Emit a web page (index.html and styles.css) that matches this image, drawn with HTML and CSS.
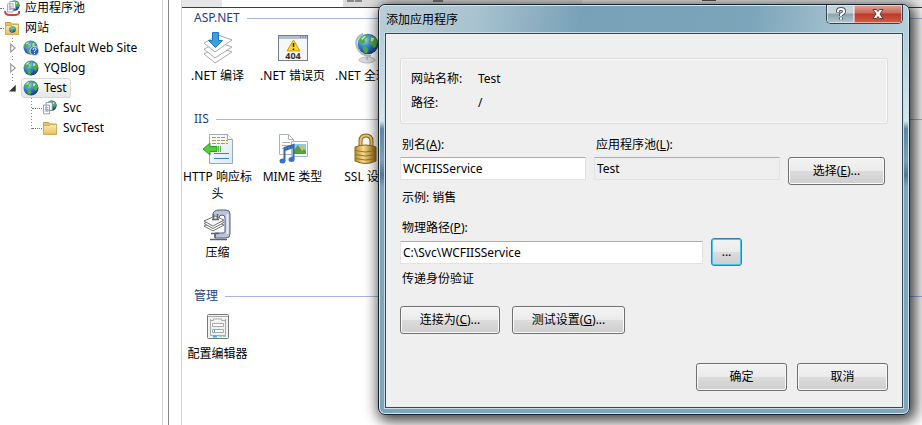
FILE: index.html
```
<!DOCTYPE html>
<html lang="zh-CN">
    <head>
        <meta charset="utf-8">
        <title>添加应用程序</title>
        <link rel="stylesheet" href="styles.css">
    </head>
    <body>
        <svg class="defs" aria-hidden="true">
            <defs>
                <radialGradient id="sea" cx="35%" cy="30%" r="75%">
                    <stop offset="0" stop-color="#a8d8f4"/>
                    <stop offset="0.45" stop-color="#3b86c8"/>
                    <stop offset="1" stop-color="#123a7c"/>
                </radialGradient>
                <linearGradient id="folder" x2="0" y2="1">
                    <stop offset="0" stop-color="#fdeeb0"/>
                    <stop offset="1" stop-color="#e5bd62"/>
                </linearGradient>
                <linearGradient id="gold" x2="1" y2="0">
                    <stop offset="0" stop-color="#b98a2c"/>
                    <stop offset="0.4" stop-color="#f6dc8c"/>
                    <stop offset="1" stop-color="#9a6a14"/>
                </linearGradient>
                <linearGradient id="paper" x2="1" y2="1">
                    <stop offset="0" stop-color="#fff"/>
                    <stop offset="1" stop-color="#d9e8f2"/>
                </linearGradient>
                <symbol id="globe" viewBox="0 0 16 16">
                    <circle cx="8" cy="8" r="7.500" fill="url(#sea)"/>
                    <path fill="#4fae43" d="M2 4.500L5 1.500 8 1.200 7.500 3 5.500 4.500 6 6.500 4 8 2 7.500 1 6zM9.500 2L13 3 15 6.500 14 9.500 12.500 11 11 9 9 8 8.500 5.500 10.500 4.500zM4 9.500L7 10 8.500 12 7 15 5 14z"/>
                    <path fill="#c9f0a6" d="M3 4L5.500 2 6.500 2.500 4 5zM10.500 3L12.500 4 11.500 6 10 6z"/>
                </symbol>
                <symbol id="pages" viewBox="0 0 16 16">
                    <path fill="#fff" stroke="#8295a5" d="M3.500.500h7v9h-7zM.500 3.500h7v10h-7z"/>
                    <path stroke="#8da0b0" d="M2 6.500h4M2 8.500h4M2 10.500h4"/>
                </symbol>
                <symbol id="dir" viewBox="0 0 16 16">
                    <path fill="#e8c26c" stroke="#c49a45" d="M1.500 13.500v-11h5l1 1.500h7v9.500z"/>
                    <path fill="url(#folder)" stroke="#d3ab55" d="M1.500 14.500v-9h6l1-1h6v10z"/>
                </symbol>
            </defs>
        </svg>

        <div class="manager">
            <nav class="tree">
                <ul>
                    <li>
                        <div class="node root">
                            <svg class="icon" viewBox="0 0 16 16">
                                <use href="#globe" x="5" y="0" width="11" height="11"/>
                                <path d="M1 11q0 4 5 4h6q4-1 3-4" fill="none" stroke="#c94444" stroke-width="2"/>
                                <use href="#pages" x="3" y="1" width="13" height="13"/>
                            </svg>
                            <span class="name">应用程序池</span>
                        </div>
                    </li>
                    <li>
                        <div class="node root">
                            <svg class="icon" viewBox="0 0 16 16">
                                <use href="#dir" width="16" height="16"/>
                                <use href="#globe" x="5" y="6" width="7" height="7"/>
                            </svg>
                            <span class="name">网站</span>
                        </div>
                        <ul class="sites">
                            <li>
                                <div class="node site">
                                    <button class="toggle" aria-label="展开"><svg viewBox="0 0 8 10"><path d="M1.500 1.500v7L5.500 5z" fill="#fff" stroke="#999"/></svg></button>
                                    <svg class="icon" viewBox="0 0 16 16">
                                        <use href="#globe" width="15" height="15"/>
                                        <circle cx="11.500" cy="11" r="4.500" fill="#2c62b4" stroke="#dce8f6"/>
                                        <path d="M10 10q0-2 1.500-2t1.500 1.300q0 .800-1.500 1.700v1M11.500 13v1" fill="none" stroke="#fff"/>
                                    </svg>
                                    <span class="name">Default Web Site</span>
                                </div>
                            </li>
                            <li>
                                <div class="node site">
                                    <button class="toggle" aria-label="展开"><svg viewBox="0 0 8 10"><path d="M1.500 1.500v7L5.500 5z" fill="#fff" stroke="#999"/></svg></button>
                                    <svg class="icon"><use href="#globe"/></svg>
                                    <span class="name">YQBlog</span>
                                </div>
                            </li>
                            <li>
                                <div class="node site">
                                    <button class="toggle" aria-label="折叠"><svg viewBox="0 0 8 10"><path d="M6 2v6H0z" fill="#333"/></svg></button>
                                    <span class="selected">
                                        <svg class="icon"><use href="#globe"/></svg>
                                        <span class="name">Test</span>
                                    </span>
                                </div>
                                <ul class="apps">
                                    <li class="node">
                                        <svg class="icon" viewBox="0 0 16 16">
                                            <use href="#globe" x="4" y="0" width="11" height="11"/>
                                            <use href="#pages" x="1" y="2" width="14" height="14"/>
                                        </svg>
                                        <span class="name">Svc</span>
                                    </li>
                                    <li class="node">
                                        <svg class="icon"><use href="#dir"/></svg>
                                        <span class="name">SvcTest</span>
                                    </li>
                                </ul>
                            </li>
                        </ul>
                    </li>
                </ul>
            </nav>

            <main class="features">
                <div class="filter-bar"></div>
                <section>
                    <h2>ASP.NET</h2>
                    <div class="items">
                        <a href="#">
                            <svg viewBox="0 0 32 32">
                                <g fill="#fff" stroke="#aaa">
                                    <path d="M2 22l14-7 14 5-17 11z"/>
                                    <path d="M2 17l14-7 14 5-17 11z"/>
                                    <path d="M2 11l14-8 14 5-17 12z"/>
                                </g>
                                <path d="M10.500.500h6v8h4L13.500 15.500 6.500 8.500h4z" fill="#3aa0e0" stroke="#1f78bb"/>
                            </svg>
                            .NET 编译
                        </a>
                        <a href="#">
                            <svg viewBox="0 0 32 32">
                                <rect x="1.500" y="3.500" width="29" height="25" fill="#f6f7f9" stroke="#777e88"/>
                                <path d="M2 5.500h28" stroke="#b3bfce" stroke-width="3"/>
                                <path d="M23 5h1M25.500 5h1M28 5h1" stroke="#555"/>
                                <path d="M16.500 8L23 19H10z" fill="#ffd633" stroke="#d19c0b"/>
                                <path d="M16.500 11v4M16.500 16.500v1.500" stroke="#222" stroke-width="1.500"/>
                                <text class="code" x="16" y="27">404</text>
                            </svg>
                            .NET 错误页
                        </a>
                        <a href="#">
                            <svg viewBox="0 0 32 32">
                                <ellipse cx="15" cy="28" rx="8" ry="3" fill="#d8dadc" stroke="#bbb"/>
                                <path d="M11 2Q2 6 5 15t14 9M15 24v4" fill="none" stroke="#b4b8bc" stroke-width="2"/>
                                <use href="#globe" x="5" y="1" width="22" height="22"/>
                            </svg>
                            .NET 全球化
                        </a>
                    </div>
                </section>
                <section>
                    <h2>IIS</h2>
                    <div class="items">
                        <a href="#">
                            <svg viewBox="0 0 32 32">
                                <path d="M7.500 1.500h18l5 5v24h-23z" fill="url(#paper)" stroke="#9ea9b2"/>
                                <path d="M25.500 1.500v5h5" fill="#fff" stroke="#9ea9b2"/>
                                <path d="M10 4.500h14M10 7.500h16M10 10.500h16" stroke="#ad9d3b" stroke-dasharray="4 1 3 1"/>
                                <path d="M12 20.500h15M12 25.500h15" stroke="#3d80c2"/>
                                <path d="M1 16l7-6v3.500h7v5H8V22z" fill="#56cb3b" stroke="#2d9c25"/>
                                <path d="M16.500 13v6M18.500 13v6" stroke="#4fbd3a"/>
                            </svg>
                            HTTP 响应标头
                        </a>
                        <a href="#">
                            <svg viewBox="0 0 32 32">
                                <path d="M2.500 1.500h9l5 5v15h-14z" fill="#fff" stroke="#aab2b8"/>
                                <path d="M11.500 1.500v5h5M5 9.500h8M5 12.500h8M5 15.500h8" fill="none" stroke="#aab2b8"/>
                                <path d="M14.500 8.500h16v15h-16z" fill="#fff" stroke="#9bb8d8"/>
                                <path d="M17 11h12v10H17z" fill="#8cc8f0"/>
                                <path d="M17 21v-4l4-5 4 6 2-2 2 2v3z" fill="#4fa52e"/>
                                <circle cx="25.500" cy="14.500" r="2" fill="#f4b731"/>
                                <path d="M7.500 28V15l9-3v14" fill="none" stroke="#3869b0" stroke-width="2"/>
                                <path d="M8 17l8-3" stroke="#3869b0" stroke-width="2"/>
                                <ellipse cx="5.500" cy="28" rx="3" ry="2.500" fill="#3974c4"/>
                                <ellipse cx="14.500" cy="26.500" rx="3" ry="2.500" fill="#3974c4"/>
                            </svg>
                            MIME 类型
                        </a>
                        <a href="#">
                            <svg viewBox="0 0 32 32">
                                <path d="M8.500 15V8q0-5.500 5.500-5.500T19.500 8v7" fill="none" stroke="#8b661a" stroke-width="4"/>
                                <path d="M8.500 15V8q0-5.500 5.500-5.500T19.500 8v7" fill="none" stroke="#e6c56c" stroke-width="2"/>
                                <path d="M3 14q10-4 21 0v14q-10 5-21 0z" fill="url(#gold)" stroke="#8b661a"/>
                                <path d="M3 17.500q10 3 21 0M3 21.500q10 3 21 0M3 25.500q10 3 21 0" fill="none" stroke="#9b7423"/>
                            </svg>
                            SSL 设置
                        </a>
                        <a href="#">
                            <svg viewBox="0 0 32 32">
                                <path d="M11 9V6q0-5 6-5h7q4 0 4 4v20q0 4-4 4H13v-5h8q2 0 2-2V9q0-3-3-3-3 0-3 3z" fill="#b9c4da" stroke="#56617a"/>
                                <path d="M25.500 5v20" stroke="#e9eef7" stroke-width="2"/>
                                <g fill="#f7f8f8" stroke="#777">
                                    <path d="M2 17l11-5 9 4-11 6z"/>
                                    <path d="M2 14.500l11-5 9 4-11 6z"/>
                                    <path d="M2 12l11-5 9 4-11 6z"/>
                                </g>
                                <path d="M10 10.500h7M11.500 5v5M15.500 5v5M13 24v5M9 24.500h8M8 30.500h17" stroke="#5b6475" stroke-width="1.500"/>
                            </svg>
                            压缩
                        </a>
                    </div>
                </section>
                <section>
                    <h2>管理</h2>
                    <div class="items">
                        <a href="#">
                            <svg viewBox="0 0 32 32">
                                <rect x="5.500" y="4.500" width="21" height="24" rx="1" fill="#f1f1f1" stroke="#777"/>
                                <path d="M6 6.500h20M8.500 9v16.500h15V9" fill="none" stroke="#aaa"/>
                                <path d="M8.500 10.500h3V9h8v1.500h4M10.500 13.500h11v3h-11zM10.500 19.500h11v3h-11z" fill="#fff" stroke="#a4a7ac"/>
                                <path d="M11 26.500h4M12 21h1" stroke="#31b9d1" stroke-width="2"/>
                                <path d="M17 26.500h3M21 26.500h3" stroke="#8acfdb"/>
                            </svg>
                            配置编辑器
                        </a>
                    </div>
                </section>
            </main>
        </div>

        <div class="dialog" role="dialog" aria-labelledby="dialog-title">
            <div class="titlebar">
                <h1 id="dialog-title">添加应用程序</h1>
                <div class="window-buttons">
                    <button class="help" aria-label="帮助">
                        <svg viewBox="0 0 12 14"><path d="M3 5.500V4q0-2 3-2t3 2.200Q9 6 6 7.500V9M6 10.500v2" fill="none" stroke="#4b5865" stroke-width="4"/><path d="M3 5V4q0-2 3-2t3 2.200Q9 6 6 7.500V9M6 10.500v2" fill="none" stroke="#fff" stroke-width="2"/></svg>
                    </button>
                    <button class="close" aria-label="关闭">
                        <svg viewBox="0 0 12 14"><path d="M1 2.500h3.500L6 4.500l1.500-2H11L8 7l3 4.500H7.500L6 9.500l-1.500 2H1L4 7z" fill="#fff" stroke="#5c3a3a"/></svg>
                    </button>
                </div>
            </div>
            <form class="client">
                <dl class="summary">
                    <dt>网站名称:</dt>
                    <dd>Test</dd>
                    <dt>路径:</dt>
                    <dd>/</dd>
                </dl>

                <div class="row top">
                    <div class="field">
                        <label for="alias">别名(<u>A</u>):</label>
                        <input id="alias" type="text" value="WCFIISService">
                    </div>
                    <div class="field">
                        <label for="pool">应用程序池(<u>L</u>):</label>
                        <input id="pool" type="text" value="Test" readonly>
                    </div>
                    <button type="button" class="select-pool">选择(<u>E</u>)...</button>
                </div>
                <p>示例: 销售</p>

                <label class="path-label" for="path">物理路径(<u>P</u>):</label>
                <div class="row">
                    <input id="path" class="path" type="text" value="C:\Svc\WCFIISService">
                    <button type="button" class="browse">...</button>
                </div>
                <p>传递身份验证</p>

                <div class="row actions">
                    <button type="button" class="connect">连接为(<u>C</u>)...</button>
                    <button type="button" class="test">测试设置(<u>G</u>)...</button>
                </div>

                <div class="row footer">
                    <button type="submit">确定</button>
                    <button type="button">取消</button>
                </div>
            </form>
        </div>
    </body>
</html>
```

FILE: styles.css
```
* {
    box-sizing: border-box;
}
html, body {
    height: 100%;
}
body {
    margin: 0;
    overflow: hidden;
    background: #fff;
    color: #000;
    font-family: "Noto Sans", "Noto Sans CJK SC", sans-serif;
    font-size: 12px;
    line-height: 20px;
}
ul, p, h1, h2, dl, dd {
    margin: 0;
    padding: 0;
    list-style: none;
    font-size: 12px;
    font-weight: normal;
}
button, input {
    font: inherit;
    color: inherit;
}
.defs {
    position: absolute;
    width: 0;
    height: 0;
}

.manager {
    display: flex;
    min-height: 100%;
}

/* connections tree */
.tree {
    flex: 0 0 169px;
    border-right: 1px solid #858585;
    background: linear-gradient(#d4d4d4, #d4d4d4) 162px 0 / 1px 100% no-repeat;
}
.tree > ul {
    margin-top: -2px;
}
.node {
    display: flex;
    align-items: center;
    height: 20px;
    gap: 5px;
    white-space: nowrap;
}
.node::before {
    content: "";
    width: 4px;
    margin-right: -5px;
    border-top: 1px dotted #777;
}
.icon {
    width: 16px;
    height: 16px;
    flex-shrink: 0;
}
.sites {
    background: repeating-linear-gradient(#888 0 1px, transparent 1px 3px) 12px 0 / 1px 50px no-repeat;
}
.site {
    padding-left: 9px;
}
.site::before {
    display: none;
}
.toggle {
    width: 9px;
    height: 12px;
    padding: 0;
    border: 0;
    background: #fff;
    display: flex;
}
.toggle svg {
    width: 9px;
    height: 12px;
}
.selected {
    display: flex;
    align-items: center;
    gap: 5px;
    height: 20px;
    margin-left: -2px;
    padding: 0 3px 0 1px;
    border: 1px solid #d9d9d9;
    border-radius: 3px;
    background: linear-gradient(#fafafa, #e6e6e6);
}
.apps {
    background: repeating-linear-gradient(#888 0 1px, transparent 1px 3px) 31px 0 / 1px 31px no-repeat;
}
.apps .node {
    padding-left: 32px;
}
.apps .node::before {
    width: 10px;
}

/* feature list */
.features {
    flex: 1;
    margin-left: 12px;
    border-left: 1px solid #d4d4d4;
}
.filter-bar {
    height: 8px;
    border-bottom: 1px solid #343a5c;
    background:
        linear-gradient(90deg, #888 7px, transparent 7px 8px, #888 8px) 165px 0 / 15px 2px no-repeat,
        linear-gradient(#777, #777) 251px 0 / 10px 2px no-repeat,
        linear-gradient(#555, #555) 520px 0 / 14px 1px no-repeat,
        linear-gradient(90deg, #e6e6e8 40px, #fff 40px 161px, #dcdcdc 161px 400px, #ececec 400px);
}
.features section {
    margin-bottom: 24px;
}
.features h2 {
    display: flex;
    align-items: center;
    gap: 7px;
    padding-left: 12px;
    color: #1e4287;
}
.features h2::after {
    content: "";
    flex: 1;
    border-top: 1px solid #a9b7dc;
}
.items {
    display: grid;
    grid-template-columns: repeat(3, 75px);
    row-gap: 7px;
    margin-left: -2px;
    padding-top: 4px;
}
.items a {
    color: #000;
    text-align: center;
    text-decoration: none;
    line-height: 17px;
}
.items svg {
    display: block;
    width: 32px;
    height: 32px;
    margin: 0 auto 3px;
}
.items + .items,
.features section:not(:last-child) .items {
    padding-bottom: 1px;
}
.code {
    font-size: 9px;
    font-weight: bold;
    text-anchor: middle;
    fill: #333;
}

/* dialog window */
.dialog {
    position: absolute;
    left: 378px;
    top: 4px;
    right: 12px;
    padding: 0 6px 6px;
    border: 1px solid #16222b;
    border-radius: 7px;
    background:
        linear-gradient(#a9c4d1, #d5e6ec 116px, #5d879f 124px, #7c9fb5 155px, #52788e 170px, #7fa5bb 182px, #7fa5bb);
    box-shadow: inset 0 0 0 1px #d4e6ee, 3px 3px 14px 3px rgba(0, 0, 0, 0.75);
}
.titlebar {
    display: flex;
    justify-content: space-between;
    height: 28px;
    margin: 0 -5px;
    padding: 0 5px 0 6px;
    border-top: 1px solid #d4e6ee;
    border-radius: 6px 6px 0 0;
    background: linear-gradient(100deg, #bacdd6, #a9c3d0 18%, #78a1b7 38%, #7ca5ba 70%, #a4c2d0 88%, #b5cfdb);
}
.titlebar h1 {
    line-height: 28px;
}
.window-buttons {
    display: flex;
    height: 19px;
    margin-top: -1px;
    border: 1px solid #35434e;
    border-top: 0;
    border-radius: 0 0 5px 5px;
    overflow: hidden;
}
.window-buttons button {
    display: flex;
    align-items: center;
    justify-content: center;
    padding: 0;
    border: 0;
    box-shadow: inset 0 0 0 1px rgba(255, 255, 255, 0.5);
}
.window-buttons svg {
    width: 12px;
    height: 14px;
}
.help {
    width: 27px;
    background: linear-gradient(#c5d3db 45%, #8ba2b0 50%, #b4c7d2);
}
.close {
    width: 48px;
    border-left: 1px solid #35434e;
    background: linear-gradient(#dc9c90 5%, #cc6555 45%, #b8392a 50%, #d55d45);
}
.client {
    padding: 24px 14px 16px;
    border: 1px solid #30495b;
    background: #efefef;
    box-shadow: 0 0 0 1px #c8dde7;
}
.summary {
    display: grid;
    grid-template-columns: 67px 1fr;
    row-gap: 3px;
    height: 66px;
    padding: 10px;
    border: 1px solid #dcdede;
    border-radius: 3px;
    box-shadow: inset 0 0 0 1px #fafafa;
}
.row {
    display: flex;
    align-items: center;
    gap: 8px;
}
.row.top {
    align-items: flex-end;
    margin-top: 11px;
}
.field {
    flex: 0 1 186px;
    min-width: 0;
    padding-bottom: 5px;
}
.field label {
    display: block;
    margin-bottom: 2px;
}
.client label,
.client p {
    padding-left: 2px;
}
.client p {
    margin-top: 3px;
}
.path-label {
    display: block;
    margin-top: 10px;
}
input {
    width: 100%;
    height: 23px;
    padding: 0 2px;
    border: 1px solid #e0e2e6;
    border-top-color: #abadb3;
    border-radius: 1px;
    background: #fff;
    outline: none;
}
input:read-only {
    background: #efefef;
}
.path {
    flex: 0 1 303px;
}
.client button {
    height: 28px;
    padding: 0;
    border: 1px solid #707070;
    border-radius: 3px;
    background: linear-gradient(#f3f3f3, #ebebeb 48%, #dcdcdc 50%, #cecece);
    box-shadow: inset 0 0 0 1px #fafafa;
}
.client .select-pool {
    width: 97px;
}
.client .browse {
    width: 31px;
    border-color: #3482ae;
    box-shadow: inset 0 0 0 1px #4cc4ec;
}
.actions {
    gap: 12px;
    margin-top: 17px;
}
.client .connect {
    width: 100px;
}
.client .test {
    width: 113px;
}
.footer {
    justify-content: flex-end;
    gap: 10px;
    margin-top: 29px;
}
.footer button {
    width: 91px;
}
```
